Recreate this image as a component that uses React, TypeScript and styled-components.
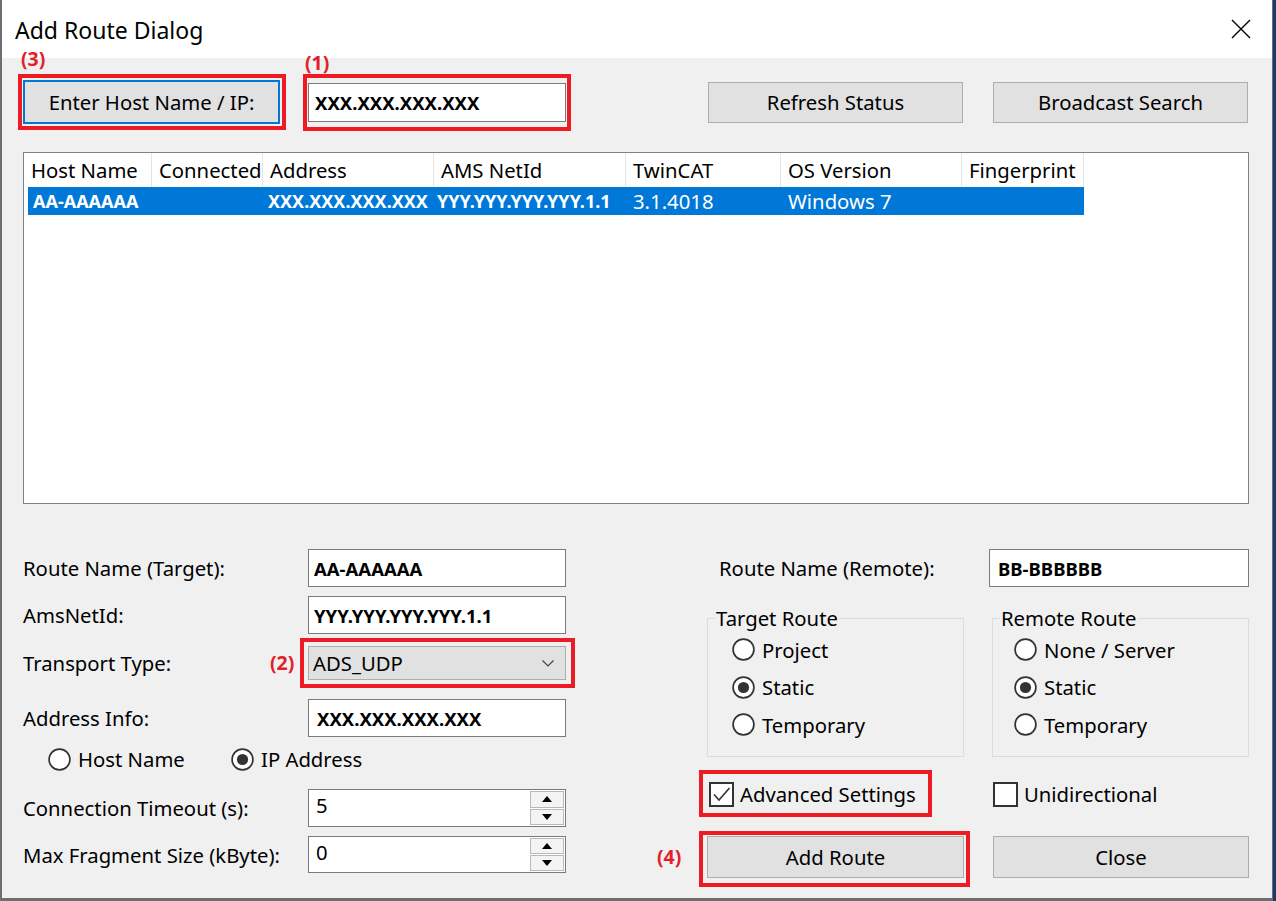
import React from "react";
import styled, { createGlobalStyle } from "styled-components";

const Global = createGlobalStyle`
  html, body { margin: 0; padding: 0; background: #1c3866; }
  body { font-family: "Noto Sans", "Open Sans", sans-serif; color: #000; }
  #root { width: 1276px; height: 901px; overflow: hidden; }
  * { box-sizing: border-box; }
`;

const RED = "#ed1c24";

const Window = styled.div`
  width: 1273px;
  height: 901px;
  border-left: 2px solid #6e6e6e;
  border-right: 1px solid #6e6e6e;
  border-bottom: 3px solid #6e6e6e;
  background: #f0f0f0;
  display: flex;
  flex-direction: column;
  font-size: 20.3px;
`;

const TitleBar = styled.div`
  flex: none;
  height: 58px;
  background: #fff;
  display: flex;
  align-items: center;
  justify-content: space-between;
  padding: 0 21px 0 13px;
`;

const Title = styled.div`
  font-size: 23px;
  line-height: 30px;
  padding-top: 2px;
`;

const Body = styled.div`
  flex: 1;
  display: flex;
  flex-direction: column;
  padding: 22px 23px 0 21px;
`;

const TopRow = styled.div`
  display: flex;
  align-items: center;
  height: 44px;
`;

const Spacer = styled.div<{ $w?: number }>`
  flex: ${(p) => (p.$w ? "none" : "1")};
  width: ${(p) => (p.$w ? `${p.$w}px` : "auto")};
`;

const Button = styled.div<{ $w: number; $h: number; $focus?: boolean }>`
  width: ${(p) => p.$w}px;
  height: ${(p) => p.$h}px;
  background: #e1e1e1;
  border: ${(p) => (p.$focus ? "2px solid #0078d7" : "1px solid #adadad")};
  display: flex;
  align-items: center;
  justify-content: center;
  line-height: 1;
  white-space: nowrap;
`;

const Marked = styled.div<{ $ml?: number }>`
  position: relative;
  display: flex;
  margin-left: ${(p) => p.$ml ?? 0}px;
`;

const Frame = styled.div<{ $t: number; $r: number; $b: number; $l: number }>`
  position: absolute;
  top: ${(p) => -p.$t}px;
  right: ${(p) => -p.$r}px;
  bottom: ${(p) => -p.$b}px;
  left: ${(p) => -p.$l}px;
  border: 4px solid ${RED};
  pointer-events: none;
`;

const Tag = styled.div<{ $x: number; $y: number }>`
  position: absolute;
  left: ${(p) => p.$x}px;
  top: ${(p) => p.$y}px;
  height: 22px;
  line-height: 22px;
  font-size: 19.5px;
  font-weight: 700;
  color: #e3202a;
  white-space: nowrap;
`;

const TextBox = styled.div<{ $w: number; $h: number; $pl?: number }>`
  width: ${(p) => p.$w}px;
  height: ${(p) => p.$h}px;
  background: #fff;
  border: 1px solid #7a7a7a;
  display: flex;
  align-items: center;
  padding-left: ${(p) => p.$pl ?? 5}px;
  font-size: 18.5px;
  font-weight: 700;
  white-space: nowrap;
`;

const ListBox = styled.div`
  margin-top: 28px;
  height: 352px;
  background: #fff;
  border: 1px solid #828282;
`;

const HeaderRow = styled.div`
  display: flex;
  height: 34px;
`;

const HeaderCell = styled.div<{ $w: number }>`
  width: ${(p) => p.$w}px;
  flex: none;
  border-right: 1px solid #e5e5e5;
  padding-left: 7px;
  display: flex;
  align-items: center;
  white-space: nowrap;
  overflow: hidden;
`;

const DataRow = styled.div`
  display: flex;
  height: 28px;
  margin-left: 4px;
  width: 1056px;
  background: #0078d7;
  color: #fff;
`;

const DataCell = styled.div<{ $w: number; $bold?: boolean; $pl: number }>`
  width: ${(p) => p.$w}px;
  flex: none;
  padding-left: ${(p) => p.$pl}px;
  display: flex;
  align-items: center;
  white-space: nowrap;
  overflow: hidden;
  font-weight: ${(p) => (p.$bold ? 700 : 400)};
  font-size: ${(p) => (p.$bold ? "18px" : "20.3px")};
`;

const Lower = styled.div`
  margin-top: 45px;
  display: flex;
  gap: 141px;
`;

const LeftCol = styled.div`
  width: 543px;
  display: flex;
  flex-direction: column;
`;

const FieldRow = styled.div<{ $h: number; $mt: number }>`
  display: flex;
  align-items: center;
  height: ${(p) => p.$h}px;
  margin-top: ${(p) => p.$mt}px;
`;

const Label = styled.div`
  width: 285px;
  flex: none;
  white-space: nowrap;
`;

const Combo = styled.div`
  width: 258px;
  height: 34px;
  background: #e1e1e1;
  border: 1px solid #adadad;
  display: flex;
  align-items: center;
  justify-content: space-between;
  padding: 0 11px 0 4px;
`;

const SpinBox = styled.div`
  width: 258px;
  height: 100%;
  background: #fff;
  border: 1px solid #7a7a7a;
  display: flex;
`;

const SpinValue = styled.div`
  flex: 1;
  padding: 2px 0 0 7px;
  line-height: 26px;
`;

const Spinner = styled.div`
  width: 35px;
  display: flex;
  flex-direction: column;
  gap: 1px;
  padding: 1px 1px 1px 0;
`;

const SpinBtn = styled.div`
  flex: 1;
  background: #f4f4f4;
  border: 1px solid #b9b9b9;
  display: flex;
  align-items: center;
  justify-content: center;
`;

const RadioRow = styled.div<{ $h: number; $mt: number }>`
  display: flex;
  align-items: center;
  height: ${(p) => p.$h}px;
  margin-top: ${(p) => p.$mt}px;
  padding-left: 25px;
`;

const Choice = styled.label<{ $w?: number; $gap?: number }>`
  display: flex;
  align-items: center;
  gap: ${(p) => p.$gap ?? 7}px;
  width: ${(p) => (p.$w ? `${p.$w}px` : "auto")};
  flex: none;
  white-space: nowrap;
`;

const RightCol = styled.div`
  width: 542px;
  display: flex;
  flex-direction: column;
`;

const RemoteRow = styled.div`
  display: flex;
  align-items: center;
  justify-content: space-between;
  height: 38px;
  padding-left: 12px;
`;

const Pair = styled.div<{ $mt: number; $h?: number }>`
  display: grid;
  grid-template-columns: 257px 257px;
  column-gap: 28px;
  margin-top: ${(p) => p.$mt}px;
  height: ${(p) => (p.$h ? `${p.$h}px` : "auto")};
  align-items: center;
`;

const Group = styled.fieldset`
  margin: 0;
  height: 152px;
  border: 1px solid #dcdcdc;
  padding: 0;
`;

const Legend = styled.legend`
  margin-left: 7px;
  padding: 0 1px;
  line-height: 26px;
  font-size: 20.3px;
`;

const RadioList = styled.div<{ $pl: number }>`
  display: flex;
  flex-direction: column;
  padding: 0 0 0 ${(p) => p.$pl}px;
`;

const RadioItem = styled(Choice)`
  height: 37.5px;
`;

const CheckCell = styled.div<{ $pl: number }>`
  display: flex;
  padding-left: ${(p) => p.$pl}px;
`;

const Radio = ({ on }: { on?: boolean }) => (
  <svg width="23" height="23" viewBox="0 0 23 23">
    <circle cx="11.5" cy="11.5" r="10.4" fill="#fff" stroke="#333" strokeWidth="1.7" />
    {on && <circle cx="11.5" cy="11.5" r="5.6" fill="#333" />}
  </svg>
);

const Check = ({ on }: { on?: boolean }) => (
  <svg width="25" height="25" viewBox="0 0 25 25">
    <rect x="1" y="1" width="23" height="23" fill="#fff" stroke="#333" strokeWidth="2" />
    {on && <path d="M5 12.5 L10 18 L20.5 6" fill="none" stroke="#333" strokeWidth="1.6" />}
  </svg>
);

const Spin = ({ value }: { value: string }) => (
  <SpinBox>
    <SpinValue>{value}</SpinValue>
    <Spinner>
      <SpinBtn>
        <svg width="10" height="6" viewBox="0 0 10 6"><polygon points="0,6 5,0 10,6" fill="#000" /></svg>
      </SpinBtn>
      <SpinBtn>
        <svg width="10" height="6" viewBox="0 0 10 6"><polygon points="0,0 10,0 5,6" fill="#000" /></svg>
      </SpinBtn>
    </Spinner>
  </SpinBox>
);

const columns = [
  { title: "Host Name", w: 128 },
  { title: "Connected", w: 111 },
  { title: "Address", w: 171 },
  { title: "AMS NetId", w: 192 },
  { title: "TwinCAT", w: 155 },
  { title: "OS Version", w: 181 },
  { title: "Fingerprint", w: 122 },
];

const row = [
  { text: "AA-AAAAAA", bold: true, pl: 5, w: 124 },
  { text: "", bold: false, pl: 7, w: 111 },
  { text: "XXX.XXX.XXX.XXX", bold: true, pl: 5, w: 171 },
  { text: "YYY.YYY.YYY.YYY.1.1", bold: true, pl: 3, w: 192 },
  { text: "3.1.4018", bold: false, pl: 7, w: 155 },
  { text: "Windows 7", bold: false, pl: 7, w: 181 },
  { text: "", bold: false, pl: 7, w: 122 },
];

export default function App() {
  return (
    <>
      <Global />
      <Window>
        <TitleBar>
          <Title>Add Route Dialog</Title>
          <svg width="20" height="20" viewBox="0 0 20 20">
            <path d="M1 1 L19 19 M19 1 L1 19" stroke="#000" strokeWidth="1.4" />
          </svg>
        </TitleBar>
        <Body>
          <TopRow>
            <Marked>
              <Button $w={257} $h={44} $focus>Enter Host Name / IP:</Button>
              <Frame $t={6} $r={6} $b={6} $l={5} />
              <Tag $x={-2} $y={-32}>(3)</Tag>
            </Marked>
            <Marked $ml={28}>
              <TextBox $w={258} $h={39} $pl={6}>XXX.XXX.XXX.XXX</TextBox>
              <Frame $t={9} $r={5} $b={9} $l={5} />
              <Tag $x={-3} $y={-31}>(1)</Tag>
            </Marked>
            <Spacer />
            <Button $w={255} $h={41}>Refresh Status</Button>
            <Spacer $w={30} />
            <Button $w={255} $h={41}>Broadcast Search</Button>
            <Spacer $w={1} />
          </TopRow>

          <ListBox>
            <HeaderRow>
              {columns.map((c) => (
                <HeaderCell key={c.title} $w={c.w}>{c.title}</HeaderCell>
              ))}
            </HeaderRow>
            <DataRow>
              {row.map((c, i) => (
                <DataCell key={i} $w={c.w} $bold={c.bold} $pl={c.pl}>{c.text}</DataCell>
              ))}
            </DataRow>
          </ListBox>

          <Lower>
            <LeftCol>
              <FieldRow $h={38} $mt={0}>
                <Label>Route Name (Target):</Label>
                <TextBox $w={258} $h={38}>AA-AAAAAA</TextBox>
              </FieldRow>
              <FieldRow $h={38} $mt={9}>
                <Label>AmsNetId:</Label>
                <TextBox $w={258} $h={38}>YYY.YYY.YYY.YYY.1.1</TextBox>
              </FieldRow>
              <FieldRow $h={34} $mt={12}>
                <Label>Transport Type:</Label>
                <Marked>
                  <Combo>
                    <span>ADS_UDP</span>
                    <svg width="12" height="7" viewBox="0 0 12 7">
                      <path d="M0.5 0.5 L6 6 L11.5 0.5" fill="none" stroke="#444" strokeWidth="1.2" />
                    </svg>
                  </Combo>
                  <Frame $t={8} $r={9} $b={8} $l={8} />
                  <Tag $x={-38} $y={6}>(2)</Tag>
                </Marked>
              </FieldRow>
              <FieldRow $h={38} $mt={19}>
                <Label>Address Info:</Label>
                <TextBox $w={258} $h={38} $pl={8}>XXX.XXX.XXX.XXX</TextBox>
              </FieldRow>
              <RadioRow $h={30} $mt={7}>
                <Choice $w={183}>
                  <Radio />
                  Host Name
                </Choice>
                <Choice>
                  <Radio on />
                  IP Address
                </Choice>
              </RadioRow>
              <FieldRow $h={38} $mt={15}>
                <Label>Connection Timeout (s):</Label>
                <Spin value="5" />
              </FieldRow>
              <FieldRow $h={37} $mt={9}>
                <Label>Max Fragment Size (kByte):</Label>
                <Spin value="0" />
              </FieldRow>
            </LeftCol>

            <RightCol>
              <RemoteRow>
                <span>Route Name (Remote):</span>
                <TextBox $w={260} $h={38} $pl={8}>BB-BBBBBB</TextBox>
              </RemoteRow>
              <Pair $mt={18}>
                <Group>
                  <Legend>Target Route</Legend>
                  <RadioList $pl={24}>
                    <RadioItem><Radio />Project</RadioItem>
                    <RadioItem><Radio on />Static</RadioItem>
                    <RadioItem><Radio />Temporary</RadioItem>
                  </RadioList>
                </Group>
                <Group>
                  <Legend>Remote Route</Legend>
                  <RadioList $pl={21}>
                    <RadioItem><Radio />None / Server</RadioItem>
                    <RadioItem><Radio on />Static</RadioItem>
                    <RadioItem><Radio />Temporary</RadioItem>
                  </RadioList>
                </Group>
              </Pair>
              <Pair $mt={23} $h={25}>
                <CheckCell $pl={2}>
                  <Marked>
                    <Choice $gap={6}>
                      <Check on />
                      Advanced Settings
                    </Choice>
                    <Frame $t={10} $r={16} $b={9} $l={10} />
                  </Marked>
                </CheckCell>
                <CheckCell $pl={1}>
                  <Choice $gap={6}>
                    <Check />
                    Unidirectional
                  </Choice>
                </CheckCell>
              </Pair>
              <Pair $mt={31} $h={42}>
                <Marked>
                  <Button $w={258} $h={42}>Add Route</Button>
                  <Frame $t={5} $r={6} $b={9} $l={8} />
                  <Tag $x={-50} $y={10}>(4)</Tag>
                </Marked>
                <CheckCell $pl={1}>
                  <Button $w={256} $h={42}>Close</Button>
                </CheckCell>
              </Pair>
            </RightCol>
          </Lower>
        </Body>
      </Window>
    </>
  );
}
